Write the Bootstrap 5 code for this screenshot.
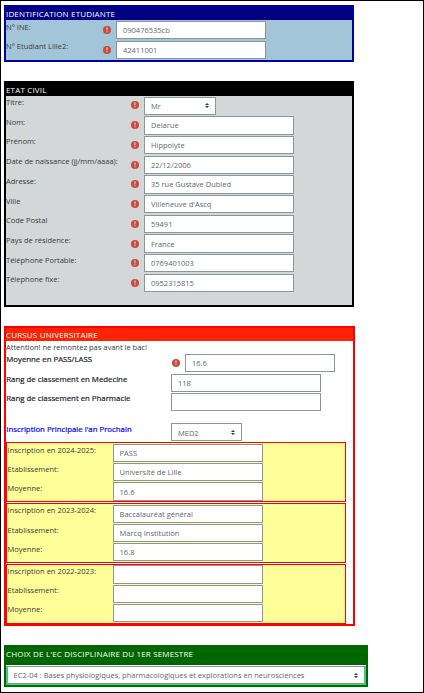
<!DOCTYPE html>
<html lang="fr">
<head>
<meta charset="utf-8">
<meta name="viewport" content="width=device-width, initial-scale=1">
<title>Dossier étudiant</title>
<link href="https://cdn.jsdelivr.net/npm/bootstrap@5.3.0/dist/css/bootstrap.min.css" rel="stylesheet">
<style>
body{font-family:"Open Sans",sans-serif;font-size:7.5px;line-height:11px;color:#373a3c;background:#fff}
.page-frame{height:693px;border:1px solid #000;padding:4px 0 0 3px;overflow:hidden}
.panel{width:350px;border:2px solid;overflow:hidden}
.panel-title{font-size:8px;line-height:14px;color:#fff;margin:0;font-weight:500;letter-spacing:.165px;white-space:nowrap;flex:none}
.ident{height:57px;border-color:#0000a0;background:#a2c6d8;margin-bottom:19px}
.ident .panel-title{background:#000080;height:13px}
.ident-rows{padding-top:1px}
.civil{height:226px;border-color:#000;background:#d3d7d7;margin-bottom:19px}
.civil .panel-title{background:#000;height:13px}
.civil-rows{padding-top:.6px}
.cursus{width:351px;height:300px;border-color:#f00;margin-bottom:19px}
.cursus .panel-title{background:#fc2404;height:13px}
.choix{width:364px;height:42px;border-color:#060;background:#00f566}
.choix .panel-title{background:#060;height:18px}
.choix-body{border-top:1px solid #fff;padding-left:1px}
.field{height:var(--pitch);white-space:nowrap}
.field label{width:var(--lab);flex:none;padding-top:.5px}
.ident .field{--pitch:20px;--lab:97px}
.ident .field:first-child label{padding-top:1px}
.ident .field:last-child label{padding-top:0}
.civil .field{--pitch:19.7px;--lab:125px}
.cursus .field{--pitch:19.5px;--lab:165px;color:#212529}
.cursus .grades label,.cursus .main-reg label{font-size:7.8px;font-weight:500;padding:0 0 0 .3px;-webkit-text-stroke:.2px currentColor}
.cursus .main-reg label{padding-top:.6px}
.form-control,.form-select{width:150px;height:18.3px;min-height:0;border:1px solid #8f959e;border-radius:0;padding:0 6px;font-size:7.5px;line-height:16px;color:#62696f;flex:none;background-color:#fff}
.form-select{background-image:url("data:image/svg+xml,%3Csvg xmlns='http://www.w3.org/2000/svg' viewBox='0 0 4 5'%3E%3Cpath fill='%23343a40' d='M2 0L0 2h4zm0 5L0 3h4z'/%3E%3C/svg%3E");background-size:4px 5px;background-position:right 6px center}
.sel-title{width:72px}
.sel-year{width:71px;padding-top:.6px}
.sel-course{width:358px;padding-left:5.6px}
.req{width:8px;height:8px;margin:5px 5px 0 0;flex:none}
.civil .field:first-child .req{margin-top:4px}
.civil .field:nth-child(8) .req{margin-top:5.4px}
.cursus .req{margin:5px 5px 0 1px}
.intro{height:13px;padding-top:.8px}
.grades{height:69px}
.main-reg.field{height:19px}
.year-box{width:340px;height:60px;border:1px solid #f00;background:#ff9;margin-bottom:1px;padding:1px 0 0 .6px}
.year-box:last-child{padding-top:.4px}
.cursus .year-box .field{--pitch:19.2px;--lab:105.4px;color:#373a3c}
.year-box .form-control{padding-left:5.6px}
.year-mid .field:first-child label,.year-box:last-child .field:nth-child(2) label{padding-top:0}
.year-mid .field:last-child .form-control{padding-bottom:.8px;height:18px}
.principal{color:#00f}
</style>
<script src="https://cdn.jsdelivr.net/npm/bootstrap@5.3.0/dist/js/bootstrap.bundle.min.js"></script>
</head>
<body>
<svg class="d-none"><symbol id="warn" viewBox="0 0 8 8"><circle cx="4" cy="4" r="4" fill="#ca4a3f"/><path d="M3.4 1.5h1.2L4.4 4.6h-.8zM3.5 5.2h1v1h-1z" fill="#f3dcd8"/></symbol></svg>
<main class="page-frame">
<section class="panel ident">
<h2 class="panel-title">IDENTIFICATION ETUDIANTE</h2>
<div class="ident-rows">
<div class="field d-flex"><label>N° INE:</label><svg class="req"><use href="#warn"/></svg><input class="form-control" value="090476535cb"></div>
<div class="field d-flex"><label>N° Etudiant Lille2:</label><svg class="req"><use href="#warn"/></svg><input class="form-control" value="42411001"></div>
</div>
</section>
<section class="panel civil">
<h2 class="panel-title">ETAT CIVIL</h2>
<div class="civil-rows">
<div class="field d-flex"><label>Titre:</label><svg class="req"><use href="#warn"/></svg><select class="form-select sel-title"><option>Mr</option></select></div>
<div class="field d-flex"><label>Nom:</label><svg class="req"><use href="#warn"/></svg><input class="form-control" value="Delarue"></div>
<div class="field d-flex"><label>Prénom:</label><svg class="req"><use href="#warn"/></svg><input class="form-control" value="Hippolyte"></div>
<div class="field d-flex"><label>Date de naissance (jj/mm/aaaa):</label><svg class="req"><use href="#warn"/></svg><input class="form-control" value="22/12/2006"></div>
<div class="field d-flex"><label>Adresse:</label><svg class="req"><use href="#warn"/></svg><input class="form-control" value="35 rue Gustave Dubled"></div>
<div class="field d-flex"><label>Ville</label><svg class="req"><use href="#warn"/></svg><input class="form-control" value="Villeneuve d'Ascq"></div>
<div class="field d-flex"><label>Code Postal</label><svg class="req"><use href="#warn"/></svg><input class="form-control" value="59491"></div>
<div class="field d-flex"><label>Pays de résidence:</label><svg class="req"><use href="#warn"/></svg><input class="form-control" value="France"></div>
<div class="field d-flex"><label>Téléphone Portable:</label><svg class="req"><use href="#warn"/></svg><input class="form-control" value="0769401003"></div>
<div class="field d-flex"><label>Télephone fixe:</label><svg class="req"><use href="#warn"/></svg><input class="form-control" value="0952315815"></div>
</div>
</section>
<section class="panel cursus">
<h2 class="panel-title">CURSUS UNIVERSITAIRE</h2>
<div class="intro">Attention! ne remontez pas avant le bac!</div>
<div class="grades">
<div class="field d-flex"><label>Moyenne en PASS/LASS</label><svg class="req"><use href="#warn"/></svg><input class="form-control" value="16.6"></div>
<div class="field d-flex"><label>Rang de classement en Medecine</label><input class="form-control" value="118"></div>
<div class="field d-flex"><label>Rang de classement en Pharmacie</label><input class="form-control"></div>
</div>
<div class="main-reg field d-flex"><label class="principal">Inscription Principale l'an Prochain</label><select class="form-select sel-year"><option>MED2</option></select></div>
<div class="year-box">
<div class="field d-flex"><label>Inscription en 2024-2025:</label><input class="form-control" value="PASS"></div>
<div class="field d-flex"><label>Etablissement:</label><input class="form-control" value="Université de Lille"></div>
<div class="field d-flex"><label>Moyenne:</label><input class="form-control" value="16.6"></div>
</div>
<div class="year-box year-mid">
<div class="field d-flex"><label>Inscription en 2023-2024:</label><input class="form-control" value="Baccalauréat général"></div>
<div class="field d-flex"><label>Etablissement:</label><input class="form-control" value="Marcq Institution"></div>
<div class="field d-flex"><label>Moyenne:</label><input class="form-control" value="16.8"></div>
</div>
<div class="year-box">
<div class="field d-flex"><label>Inscription en 2022-2023:</label><input class="form-control"></div>
<div class="field d-flex"><label>Etablissement:</label><input class="form-control"></div>
<div class="field d-flex"><label>Moyenne:</label><input class="form-control"></div>
</div>
</section>
<section class="panel choix">
<h2 class="panel-title">CHOIX DE L'EC DISCIPLINAIRE DU 1ER SEMESTRE</h2>
<div class="choix-body">
<select class="form-select sel-course"><option>EC2-04 : Bases physiologiques, pharmacologiques et explorations en neurosciences</option></select>
</div>
</section>
</main>
</body>
</html>
